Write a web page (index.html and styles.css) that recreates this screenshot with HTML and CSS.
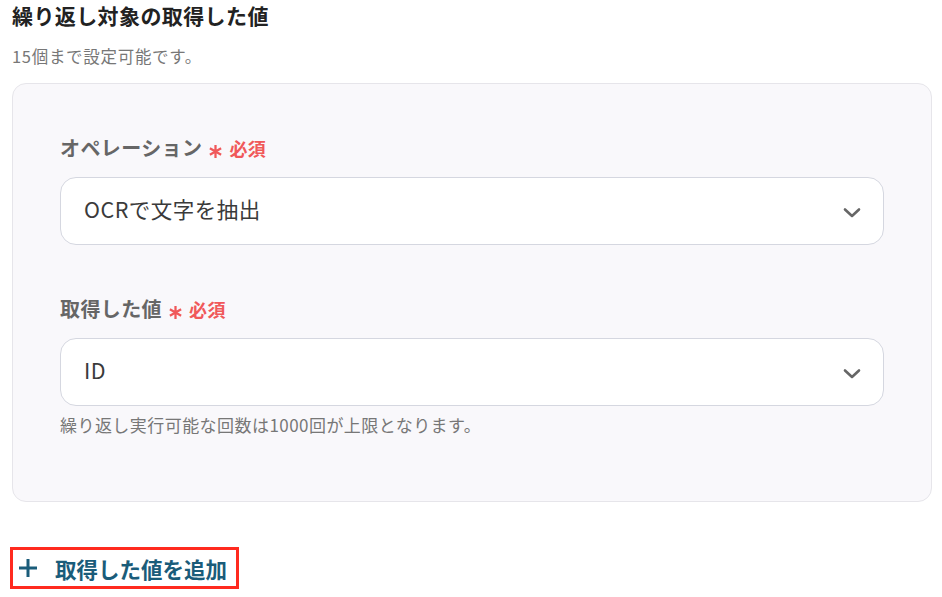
FILE: index.html
```html
<!DOCTYPE html>
<html lang="ja">
<head>
    <meta charset="UTF-8">
    <title>繰り返し対象の取得した値</title>
    <link rel="stylesheet" href="styles.css">
</head>
<body>
    <div class="page">
        <h2 class="title">繰り返し対象の取得した値</h2>
        <p class="note">15個まで設定可能です。</p>

        <div class="card">
            <div class="field">
                <div class="label">オペレーション<span class="req"><svg class="star" width="15" height="15" viewBox="0 0 16 16"><path d="M8 1 V15 M2 4.5 L14 11.5 M2 11.5 L14 4.5" stroke="#f0585a" stroke-width="2.4"/></svg>必須</span></div>
                <div class="select">
                    <span class="val">OCRで文字を抽出</span>
                    <svg class="chev" width="18" height="12" viewBox="0 0 18 12"><path d="M2 2.5 L9 9 L16 2.5" fill="none" stroke="#666" stroke-width="2.6" stroke-linecap="round" stroke-linejoin="round"/></svg>
                </div>
            </div>

            <div class="field">
                <div class="label">取得した値<span class="req"><svg class="star" width="15" height="15" viewBox="0 0 16 16"><path d="M8 1 V15 M2 4.5 L14 11.5 M2 11.5 L14 4.5" stroke="#f0585a" stroke-width="2.4"/></svg>必須</span></div>
                <div class="select">
                    <span class="val">ID</span>
                    <svg class="chev" width="18" height="12" viewBox="0 0 18 12"><path d="M2 2.5 L9 9 L16 2.5" fill="none" stroke="#666" stroke-width="2.6" stroke-linecap="round" stroke-linejoin="round"/></svg>
                </div>
                <p class="help">繰り返し実行可能な回数は1000回が上限となります。</p>
            </div>
        </div>

        <a class="add" href="javascript:;">
            <svg width="20" height="20" viewBox="0 0 20 20"><path d="M10 1 V19 M1 10 H19" stroke="#1a5c7a" stroke-width="3"/></svg>
            <span>取得した値を追加</span>
        </a>
    </div>
</body>
</html>
```

FILE: styles.css
```css
*{
    margin: 0;
    padding: 0;
    box-sizing: border-box;
}

body{
    font-family: "Noto Sans CJK JP", "Noto Sans", sans-serif;
    background-color: #fff;
    color: #333;
}

.page{
    width: 942px;
    padding: 0 10px 0 12px;
}

.title{
    font-size: 21px;
    font-weight: bold;
    letter-spacing: 0.4px;
    line-height: 30px;
    color: #222;
}

.note{
    margin-top: 14px;
    font-size: 16.5px;
    letter-spacing: 0.7px;
    line-height: 24px;
    color: #777;
}

/* 灰色のカード */
.card{
    margin-top: 15px;
    background-color: #f9f8fb;
    border: 1px solid #e6e5ea;
    border-radius: 14px;
    padding: 49px 47px 64px 47px;
}

.field + .field{
    margin-top: 49px;
}

.label{
    display: flex;
    align-items: center;
    font-size: 20px;
    font-weight: bold;
    letter-spacing: 0.4px;
    line-height: 30px;
    color: #666;
}

.req{
    display: flex;
    align-items: center;
    margin-left: 6px;
    font-size: 18px;
    font-weight: bold;
    color: #f0585a;
}

.star{
    display: block;
    margin-right: 6px;
    position: relative;
    top: 3px;
}

.select{
    margin-top: 14px;
    height: 68px;
    background-color: #fff;
    border: 1px solid #d5d7e0;
    border-radius: 16px;
    display: flex;
    align-items: center;
    justify-content: space-between;
    padding: 0 22px 0 23px;
    font-size: 21.5px;
    letter-spacing: 0.5px;
    color: #3a3a3a;
}

/* 文字を少し上に */
.val{
    position: relative;
    top: -3px;
}

.chev{
    display: block;
    position: relative;
    top: 2px;
}

.help{
    margin-top: 7px;
    font-size: 17px;
    letter-spacing: 0.45px;
    line-height: 24px;
    color: #777;
}

/* 追加ボタン */
.add{
    margin-top: 45px;
    margin-left: -2px;
    display: inline-flex;
    align-items: center;
    height: 42px;
    padding: 0 9px 0 5px;
    border: 3px solid #ff2a1f;
    text-decoration: none;
    color: #1a5c7a;
    font-size: 21.5px;
    font-weight: bold;
}

.add svg{
    margin-right: 17px;
}
```
